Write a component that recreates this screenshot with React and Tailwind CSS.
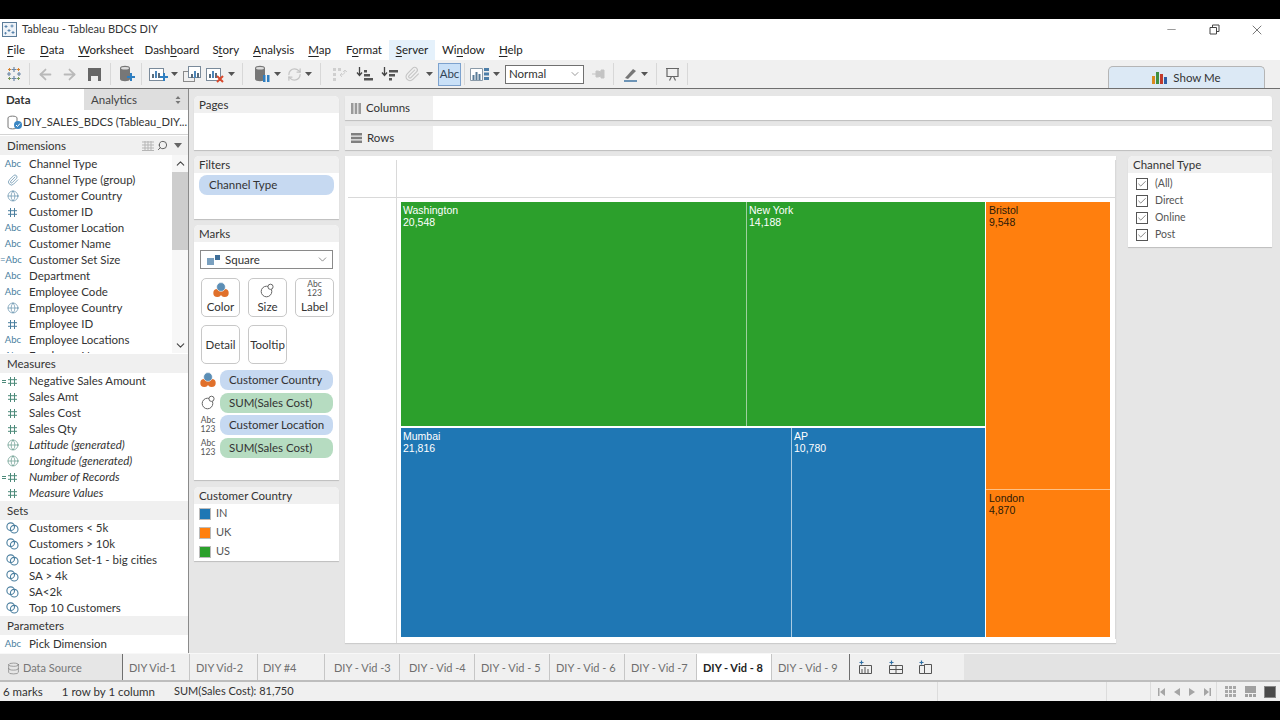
import React from "react";
import { Globe, Paperclip, ChevronDown, ChevronUp, ArrowLeft, ArrowRight, RefreshCw, X, Minus, Search, Check, Database } from "lucide-react";

const Caret = ({ className = "ml-[3px]" }) => (
  <svg width="7" height="4" viewBox="0 0 7 4" className={`shrink-0 ${className}`}><path d="M0 0h7L3.5 4z" fill="#555" /></svg>
);
const Sep = ({ className }) => <div className={`w-px h-[22px] bg-[#d8d8d8] shrink-0 ${className}`} />;

const Bars = ({ plus, cross, dup }) => (
  <svg width="20" height="18" viewBox="0 0 20 18" className="shrink-0">
    {dup && <rect x="0.5" y="6.5" width="11" height="10" fill="none" stroke="#8a8a8a" />}
    <rect x={dup ? 5.5 : 1.5} y={dup ? 1.5 : 3.5} width={dup ? 12 : 14} height={dup ? 11 : 12} fill="#fff" stroke="#7a8a9a" />
    <rect x={dup ? 8 : 4} y="9" width="2" height="4" fill="#5a6c7c" />
    <rect x={dup ? 11 : 7} y="6" width="2" height="7" fill="#4d86b8" />
    <rect x={dup ? 14 : 10} y="8" width="2" height="5" fill="#5a6c7c" />
    {plus && <path d="M12 11h3V8h2v3h3v2h-3v3h-2v-3h-3z" fill="#2f7fc1" />}
    {cross && <path d="M12 11l6 6M18 11l-6 6" stroke="#d9492c" strokeWidth="2" />}
  </svg>
);
const Cyl = ({ plus, pause }) => (
  <svg width="18" height="18" viewBox="0 0 18 18" className="shrink-0">
    <path d="M2 3c0-3 10-3 10 0v11c0 3-10 3-10 0z" fill="#777" />
    <ellipse cx="7" cy="3.2" rx="4" ry="1.3" fill="#ddd" />
    {plus && <path d="M9 11h3V8h2v3h3v2h-3v3h-2v-3H9z" fill="#2f7fc1" />}
    {pause && <path d="M10 10h2.5v7H10zM14 10h2.5v7H14z" fill="#2f7fc1" />}
  </svg>
);
const SortIcon = ({ desc }) => (
  <svg width="18" height="16" viewBox="0 0 18 16" className="shrink-0">
    <path d="M3.5 1v8M1 6.5l2.5 3 2.5-3" stroke="#444" strokeWidth="1.3" fill="none" />
    {desc ? (
      <path d="M8 4h9v2.5H8zM8 8h6v2.5H8zM8 12h3v2.5H8z" fill="#555" />
    ) : (
      <path d="M8 12h9v2.5H8zM8 8h6v2.5H8zM8 4h3v2.5H8z" fill="#555" />
    )}
  </svg>
);
const Logo = ({ s = 16 }) => (
  <svg width={s} height={s} viewBox="0 0 16 16" className="shrink-0">
    <path d="M8 1v5M5.5 3.5h5M3 6v4M1 8h4M13 6v4M11 8h4M8 10v5M5.5 12.5h5" stroke="#6c87a5" strokeWidth="1.2" />
    <path d="M3.5 2v3M2 3.5h3M12.5 2v3M11 3.5h3" stroke="#d9822b" strokeWidth="1" />
    <path d="M3.5 11v3M2 12.5h3M12.5 11v3M11 12.5h3" stroke="#7a9a5a" strokeWidth="1" />
  </svg>
);
const TitleLogo = () => (
  <svg width="15" height="15" viewBox="0 0 15 15" className="shrink-0">
    <rect x="0.5" y="0.5" width="14" height="14" fill="#eef3f8" stroke="#5b7c99" />
    <path d="M4 3v3M2.5 4.5h3M10 2.5v3M8.5 4h3M7 7v3M5.5 8.5h3M11 9v3M9.5 10.5h3M3.5 10v2.5M2.3 11.2h2.5" stroke="#4f7ea8" strokeWidth="0.9" />
  </svg>
);
const Tag = ({ eq }) => (
  <span className="w-[22px] shrink-0 text-right text-[9.5px] leading-4 text-[#4b7f9f] pr-[1px] whitespace-nowrap">{eq ? "=Abc" : "Abc"}</span>
);
const Hash = ({ c = "#4b7f9f", eq }) => (
  <span className="w-[19px] shrink-0 flex justify-end items-center pr-[1px]">
    {eq && <span className="w-[4px] h-[3px] border-y mr-px" style={{ borderColor: c }} />}
    <svg width="11" height="11" viewBox="0 0 11 11">
      <path d="M3.5 1v9M7.5 1v9M1 3.7h9M1 7.3h9" stroke={c} strokeWidth="1" fill="none" />
    </svg>
  </span>
);
const Glob = ({ c = "#4b7f9f" }) => (
  <span className="w-[21px] shrink-0 flex justify-end pr-[2px]"><Globe size={12} color={c} strokeWidth={1.2} /></span>
);
const Clip = () => (
  <span className="w-[21px] shrink-0 flex justify-end pr-[2px]"><Paperclip size={12} color="#4b7f9f" strokeWidth={1.3} /></span>
);
const SetI = () => (
  <span className="w-[21px] shrink-0 flex justify-end pr-[2px]">
    <svg width="13" height="12" viewBox="0 0 13 12">
      <circle cx="4.7" cy="4.7" r="3.8" fill="none" stroke="#4b7f9f" strokeWidth="1.1" />
      <circle cx="8.2" cy="7.2" r="3.8" fill="none" stroke="#4b7f9f" strokeWidth="1.1" />
    </svg>
  </span>
);

const Row = ({ icon, children, italic }) => (
  <div className={`h-4 flex items-center shrink-0 ${italic ? "italic" : ""}`}>
    <div className="w-[22px] flex shrink-0">{icon}</div>
    <span className="ml-[7px] whitespace-nowrap text-[#333]">{children}</span>
  </div>
);
const SecHead = ({ children, right }) => (
  <div className="h-[19px] bg-[#f0f0f0] flex items-center pl-[7px] shrink-0 text-[#333]">{children}{right}</div>
);
const G = "#4d8a7a";

const ColorIcon = ({ s = 16 }) => (
  <svg width={s} height={s} viewBox="0 0 16 16" className="shrink-0">
    <circle cx="4.3" cy="11" r="4" fill="#e0702b" />
    <circle cx="11.7" cy="11" r="4" fill="#e0702b" />
    <circle cx="8" cy="5" r="4.4" fill="#5c8eb5" stroke="#fff" strokeWidth="0.6" />
  </svg>
);
const SizeIcon = () => (
  <svg width="15" height="15" viewBox="0 0 15 15" className="shrink-0">
    <circle cx="6.5" cy="8.5" r="5.3" fill="none" stroke="#666" />
    <circle cx="10.5" cy="3.8" r="2.6" fill="#fff" stroke="#666" />
  </svg>
);
const AbcStack = () => (
  <div className="flex flex-col items-center text-[8.5px] leading-[9px] text-[#555] shrink-0">
    <span>Abc</span>
    <span>123</span>
  </div>
);

const MarkBtn = ({ icon, label, className = "" }) => (
  <div className={`w-[39px] h-[39px] shrink-0 border border-[#c8c8c8] rounded-[5px] bg-white flex flex-col items-center pb-[1px] text-[#333] ${className}`}>
    {icon}
    <span className="leading-[17px]">{label}</span>
  </div>
);
const MarkRow = ({ icon, label, green }) => (
  <div className="flex items-center h-5">
    <div className="w-[26px] flex justify-center shrink-0 pl-[2px]">{icon}</div>
    <div className={`w-[113px] h-5 rounded-[8px] pl-[9px] flex items-center text-[#333] ${green ? "bg-[#b6dcc1]" : "bg-[#c6d9f1]"}`}>{label}</div>
  </div>
);
const Card = ({ title, className = "", children }) => (
  <div className={`bg-white rounded-t-[5px] shadow-[0_1px_1px_#bdbdbd] shrink-0 flex flex-col ${className}`}>
    <div className="h-[17px] bg-[#f0f0f0] rounded-t-[5px] pl-[5px] flex items-center text-[#333] shrink-0">{title}</div>
    {children}
  </div>
);
const Shelf = ({ icon, label }) => (
  <div className="h-6 flex bg-white shadow-[0_1px_1px_#bdbdbd] rounded-t-[3px] shrink-0">
    <div className="w-[88px] bg-[#f0f0f0] flex items-center pl-[6px] gap-[5px] text-[#333]">{icon}{label}</div>
  </div>
);
const Legend = ({ c, t }) => (
  <div className="flex items-center h-[19px] pl-[5px] text-[#555] text-[11px]">
    <span className="w-3 h-3 mr-[5px] border border-[#bbb]" style={{ background: c }} />
    {t}
  </div>
);
const CheckRow = ({ t }) => (
  <div className="flex items-center h-[17px] pl-2 text-[#555] text-[10.5px]">
    <span className="w-3 h-3 border border-[#555] mr-[7px] flex items-center justify-center bg-white">
      <Check size={10} color="#444" strokeWidth={1.5} />
    </span>
    {t}
  </div>
);
const Block = ({ c, name, v, className = "", tone = "text-white pl-[2px]" }) => (
  <div className={`font-['Liberation_Sans',sans-serif] text-[10.5px] leading-3 pt-[2px] ${tone} ${className}`} style={{ background: c }}>
    <div>{name}</div>
    <div>{v}</div>
  </div>
);
const Tab = ({ t, w, active }) => (
  <div className={`h-full flex items-center pt-[2px] border-r border-[#c6c6c6] shrink-0 whitespace-nowrap ${w} ${active ? "bg-white font-bold text-[#222]" : "text-[#6e6e6e]"}`}>{t}</div>
);
const SheetIcon = ({ kind }) => (
  <svg width="15" height="15" viewBox="0 0 15 15" className="shrink-0">
    <path d="M3.5 0.5v4M1.5 2.5h4" stroke="#2f6fa5" strokeWidth="1.2" />
    {kind === "ws" && <path d="M1.5 5.5h12v8h-12zM4 9v4M7 7v6M10 9v4" fill="none" stroke="#555" />}
    {kind === "db" && <path d="M1.5 5.5h13v8h-13zM1.5 9.5h13M8 5.5v8" fill="none" stroke="#555" />}
    {kind === "st" && <path d="M1.5 5.5h5v8h-5zM6.5 4.5h7v9h-7z" fill="none" stroke="#555" />}
  </svg>
);
const M = ({ u, pre = "", post = "", className = "" }) => (
  <span className={`whitespace-nowrap shrink-0 ${className}`}>{pre}<u className="underline-offset-2">{u}</u>{post}</span>
);

export default function App() {
  return (
    <div className="w-[1280px] h-[720px] bg-black overflow-hidden flex flex-col py-[19px] text-[11.5px] font-['Lato',sans-serif] text-[#333]">
      {/* Title bar */}
      <div className="h-[21px] bg-white flex items-center pl-[2px] shrink-0">
        <TitleLogo />
        <span className="ml-[5px] text-[11px] text-[#333]">Tableau - Tableau BDCS DIY</span>
        <Minus size={13} strokeWidth={1} color="#444" className="ml-auto" />
        <svg width="11" height="11" viewBox="0 0 11 11" className="ml-[31px]"><path d="M1 3.5h6.5V10H1zM3.5 3.5V1H10v6.5H7.5" fill="none" stroke="#444" /></svg>
        <X size={16} strokeWidth={1} color="#333" className="ml-[29px] mr-[15px]" />
      </div>
      {/* Menu */}
      <div className="h-5 bg-white flex items-center shrink-0 text-[#222] relative">
        <M u="F" post="ile" className="ml-[7px]" />
        <M u="D" post="ata" className="ml-[15px]" />
        <M u="W" post="orksheet" className="ml-[14px]" />
        <M pre="Dash" u="b" post="oard" className="ml-[11px]" />
        <M pre="S" u="t" post="ory" className="ml-[13px]" />
        <M u="A" post="nalysis" className="ml-[14px]" />
        <M u="M" post="ap" className="ml-[14px]" />
        <M pre="F" u="o" post="rmat" className="ml-[15px]" />
        <div className="ml-[7px] w-[46px] h-5 bg-[#e5f1fb] flex items-center justify-center"><M u="S" post="erver" /></div>
        <M pre="Wi" u="n" post="dow" className="ml-[7px]" />
        <M u="H" post="elp" className="ml-[14px]" />
      </div>
      {/* Toolbar */}
      <div className="h-[28px] bg-[#f0f0f0] flex items-center shrink-0 border-b border-[#6f6f6f] box-content relative">
        <div className="ml-[6px]"><Logo /></div>
        <Sep className="ml-[7px]" />
        <ArrowLeft size={17} color="#b9b9b9" strokeWidth={2.5} className="ml-[7px] shrink-0" />
        <ArrowRight size={17} color="#b9b9b9" strokeWidth={2.5} className="ml-[7px] shrink-0" />
        <svg width="15" height="15" viewBox="0 0 15 15" className="ml-[9px] shrink-0"><path d="M1 1h13v13H1z" fill="#666" /><path d="M4 9h7v5H4z" fill="#eee" /></svg>
        <Sep className="ml-[8px]" />
        <div className="ml-[7px]"><Cyl plus /></div>
        <Sep className="ml-[5px]" />
        <div className="ml-[6px] flex items-center"><Bars plus /><Caret /></div>
        <div className="ml-[5px]"><Bars dup /></div>
        <div className="ml-[2px] flex items-center"><Bars cross /><Caret /></div>
        <Sep className="ml-[7px]" />
        <div className="ml-[10px] flex items-center"><Cyl pause /><Caret /></div>
        <div className="ml-[6px] flex items-center"><RefreshCw size={15} color="#c4c4c4" strokeWidth={2} /><Caret /></div>
        <Sep className="ml-[8px]" />
        <svg width="17" height="16" viewBox="0 0 17 16" className="ml-[10px] shrink-0"><path d="M2 2h3v3H2zM7 2h3v3H7zM2 7h3v3H2zM2 12h3v3H2z" fill="#cfcfcf" /><path d="M9 9c3 0 5-1 5-5M14 4l-2 2M14 4l2 2M9 9l2-2M9 9l2 2" stroke="#cfcfcf" fill="none" /></svg>
        <div className="ml-[8px]"><SortIcon /></div>
        <div className="ml-[7px]"><SortIcon desc /></div>
        <Paperclip size={16} color="#c4c4c4" strokeWidth={1.6} className="ml-[5px] shrink-0" />
        <Caret className="ml-[6px]" />
        <div className="ml-[5px] w-[23px] h-[23px] bg-[#c9e0f7] border border-[#7da2ce] flex items-center justify-center text-[#345] shrink-0">Abc</div>
        <Sep className="ml-[3px]" />
        <div className="ml-[5px] flex items-center">
          <svg width="20" height="14" viewBox="0 0 20 14"><path d="M0.5 1.500h12v12h-12z" fill="#fff" stroke="#8a9aa8" /><path d="M2.500 8h2v5h-2zM5.500 5h2v8h-2zM8.500 7h2v6h-2z" fill="#5a7c98" /><path d="M14 1h5v3h-5zM14 5.500h5v3h-5zM14 10h5v3h-5z" fill="#4d7ea8" /></svg>
          <Caret />
        </div>
        <div className="ml-[5px] w-[79px] h-[19px] bg-white border border-[#707070] flex items-center pl-[3px] text-[#333] shrink-0">
          Normal
          <ChevronDown size={12} strokeWidth={1.2} color="#555" className="ml-auto mr-[2px]" />
        </div>
        <svg width="14" height="10" viewBox="0 0 14 10" className="ml-[8px] shrink-0"><path d="M0 5h4M4 2h2l3 1v4l-3 1H4zM9 1h3v8H9z" fill="#c4c4c4" stroke="#c4c4c4" /></svg>
        <Sep className="ml-[7px]" />
        <div className="ml-[9px] flex items-center">
          <svg width="15" height="15" viewBox="0 0 15 15"><path d="M2 11L10 2l3 2-8 8z" fill="#777" /><path d="M1 14h13" stroke="#4d7ea8" strokeWidth="1.6" /></svg>
          <Caret />
        </div>
        <Sep className="ml-[8px]" />
        <svg width="15" height="15" viewBox="0 0 15 15" className="ml-[8px] shrink-0"><path d="M1 1.500h13M2 1.500v8h11v-8M4.500 13.500l2-4M10.500 13.500l-2-4" fill="none" stroke="#666" strokeWidth="1.2" /></svg>
        <Sep className="ml-[7px]" />
        <div className="ml-auto mr-[15px] w-[157px] h-[22px] self-end bg-[#dce9f5] border border-b-0 border-[#b5b5b5] rounded-t-[5px] flex items-center justify-center gap-[6px] text-[#333]">
          <svg width="15" height="13" viewBox="0 0 15 13"><path d="M0 5h3v8H0z" fill="#d98a1f" /><path d="M4 1h3v12H4z" fill="#3f8f3f" /><path d="M8 3h3v10H8z" fill="#c23b2c" /><path d="M12 6h3v7h-3z" fill="#2f5fa5" /></svg>
          Show Me
        </div>
      </div>

      {/* Body */}
      <div className="h-[564px] shrink-0 flex bg-[#e6e6e6]">
        {/* Data pane */}
        <div className="w-[189px] shrink-0 bg-white border-r border-[#8a8a8a] flex flex-col overflow-hidden">
          <div className="h-[21px] flex shrink-0">
            <div className="w-[84px] pl-[6px] flex items-center font-bold text-[#333]">Data</div>
            <div className="flex-1 bg-[#dedede] flex items-center pl-[7px] text-[#444]">
              Analytics
              <svg width="6" height="8" viewBox="0 0 6 8" className="ml-auto mr-[7px]"><path d="M3 0l2.500 3h-5zM3 8L.5 5h5z" fill="#777" /></svg>
            </div>
          </div>
          <div className="h-[25px] flex items-center pl-[7px] border-b border-[#d4d4d4] shrink-0 whitespace-nowrap text-[#333] text-[11.2px]">
            <svg width="16" height="15" viewBox="0 0 16 15" className="shrink-0"><path d="M1 3c0-2.500 9-2.500 9 0v9c0 2.500-9 2.500-9 0z" fill="#fff" stroke="#777" /><circle cx="11" cy="10" r="4" fill="#3b87c4" /><path d="M9 10l1.500 1.500L13 8.500" stroke="#fff" fill="none" /></svg>
            DIY_SALES_BDCS (Tableau_DIY...
          </div>
          <div className="h-px shrink-0" />
          <SecHead right={
            <div className="ml-auto flex items-center mr-[6px] gap-[3px]">
              <svg width="12" height="10" viewBox="0 0 12 10"><path d="M0 1h12M0 4h12M0 7h12M0 9.500h12M3 0v10M6 0v10M9 0v10" stroke="#b5b5b5" /></svg>
              <Search size={11} color="#555" className="-scale-x-100" />
              <svg width="8" height="5" viewBox="0 0 8 5" className="ml-[3px]"><path d="M0 0h8L4 5z" fill="#666" /></svg>
            </div>
          }>Dimensions</SecHead>
          <div className="h-[198px] flex shrink-0 overflow-hidden">
            <div className="w-[172px] pt-px flex flex-col shrink-0">
              <Row icon={<Tag />}>Channel Type</Row>
              <Row icon={<Clip />}>Channel Type (group)</Row>
              <Row icon={<Glob />}>Customer Country</Row>
              <Row icon={<Hash />}>Customer ID</Row>
              <Row icon={<Tag />}>Customer Location</Row>
              <Row icon={<Tag />}>Customer Name</Row>
              <Row icon={<Tag eq />}>Customer Set Size</Row>
              <Row icon={<Tag />}>Department</Row>
              <Row icon={<Tag />}>Employee Code</Row>
              <Row icon={<Glob />}>Employee Country</Row>
              <Row icon={<Hash />}>Employee ID</Row>
              <Row icon={<Tag />}>Employee Locations</Row>
              <Row icon={<Tag />}>Employee Name</Row>
            </div>
            <div className="flex-1 flex flex-col items-center bg-[#f7f7f7]">
              <ChevronUp size={13} strokeWidth={2} color="#444" className="mt-[2px] shrink-0" />
              <div className="w-full h-[78px] bg-[#cdcdcd] mt-[2px] shrink-0" />
              <ChevronDown size={13} strokeWidth={2} color="#444" className="mt-auto mb-[1px] shrink-0" />
            </div>
          </div>
          <div className="h-px shrink-0" />
          <SecHead>Measures</SecHead>
          <Row icon={<Hash c={G} eq />}>Negative Sales Amount</Row>
          <Row icon={<Hash c={G} />}>Sales Amt</Row>
          <Row icon={<Hash c={G} />}>Sales Cost</Row>
          <Row icon={<Hash c={G} />}>Sales Qty</Row>
          <Row icon={<Glob c={G} />} italic>Latitude (generated)</Row>
          <Row icon={<Glob c={G} />} italic>Longitude (generated)</Row>
          <Row icon={<Hash c={G} eq />} italic>Number of Records</Row>
          <Row icon={<Hash c={G} />} italic>Measure Values</Row>
          <SecHead>Sets</SecHead>
          <Row icon={<SetI />}>Customers &lt; 5k</Row>
          <Row icon={<SetI />}>Customers &gt; 10k</Row>
          <Row icon={<SetI />}>Location Set-1 - big cities</Row>
          <Row icon={<SetI />}>SA &gt; 4k</Row>
          <Row icon={<SetI />}>SA&lt;2k</Row>
          <Row icon={<SetI />}>Top 10 Customers</Row>
          <SecHead>Parameters</SecHead>
          <div className="h-px shrink-0" />
          <Row icon={<Tag />}>Pick Dimension</Row>
        </div>

        {/* Cards column */}
        <div className="w-[156px] shrink-0 pl-[5px] pr-[6px] pt-[7px] flex flex-col">
          <Card title="Pages" className="h-[54px]" />
          <Card title="Filters" className="h-[63px] mt-[6px]">
            <div className="mt-[2px] mx-[5px] h-5 rounded-[8px] bg-[#c6d9f1] pl-[10px] flex items-center text-[#333]">Channel Type</div>
          </Card>
          <Card title="Marks" className="h-[255px] mt-[6px]">
            <div className="mt-[8px] mx-[6px] h-[19px] border border-[#8a8a8a] flex items-center pl-[6px] text-[#333]">
              <svg width="13" height="10" viewBox="0 0 13 10" className="mr-[5px]"><path d="M0 3h7v7H0z" fill="#7aa0bf" /><path d="M8 0h5v5H8z" fill="#3f6f99" /></svg>
              Square
              <ChevronDown size={13} strokeWidth={1.2} color="#555" className="ml-auto mr-[3px]" />
            </div>
            <div className="flex mt-[9px] ml-[7px]">
              <MarkBtn icon={<ColorIcon />} label="Color" className="justify-end" />
              <MarkBtn icon={<SizeIcon />} label="Size" className="ml-[8px] justify-end" />
              <MarkBtn icon={<AbcStack />} label="Label" className="ml-[8px] justify-end" />
            </div>
            <div className="flex mt-[8px] ml-[7px]">
              <MarkBtn label="Detail" className="justify-center" />
              <MarkBtn label="Tooltip" className="ml-[8px] justify-center" />
            </div>
            <div className="flex flex-col mt-[6px] gap-[2.5px]">
              <MarkRow icon={<ColorIcon />} label="Customer Country" />
              <MarkRow icon={<SizeIcon />} label="SUM(Sales Cost)" green />
              <MarkRow icon={<AbcStack />} label="Customer Location" />
              <MarkRow icon={<AbcStack />} label="SUM(Sales Cost)" green />
            </div>
          </Card>
          <Card title="Customer Country" className="h-[74px] mt-[7px]">
            <Legend c="#1f77b4" t="IN" />
            <Legend c="#ff7f0e" t="UK" />
            <Legend c="#2ca02c" t="US" />
          </Card>
        </div>

        {/* Main */}
        <div className="flex-1 min-w-0 pt-[7px] pr-[8px] flex flex-col">
          <Shelf label="Columns" icon={
            <svg width="10" height="11" viewBox="0 0 10 11"><path d="M0 0h2.500v11H0zM3.700 0h2.500v11H3.700zM7.400 0H10v11H7.400z" fill="#9a9a9a" /></svg>
          } />
          <div className="h-[6px] shrink-0" />
          <Shelf label="Rows" icon={
            <svg width="11" height="10" viewBox="0 0 11 10"><path d="M0 0h11v2.500H0zM0 3.700h11v2.500H0zM0 7.400h11V10H0z" fill="#808080" /></svg>
          } />
          <div className="flex mt-[6px] shrink-0">
            {/* Canvas */}
            <div className="w-[771px] h-[487px] bg-white flex shrink-0 shadow-[0_1px_1px_#ccc]">
              <div className="w-[51px] flex flex-col shrink-0 pt-[4px]">
                <div className="h-[38px] border-b border-[#d9d9d9] ml-[3px]" />
              </div>
              <div className="flex-1 flex flex-col pt-[4px] min-w-0">
                <div className="h-[38px] border-b border-l border-[#d9d9d9] shrink-0 mr-[2px]" />
                <div className="flex-1 border-l border-[#d9d9d9] pl-[4px] pt-[4px] pb-[6px] flex min-h-0">
                  <div className="w-[584px] flex flex-col shrink-0">
                    <div className="h-[224px] flex shrink-0 border-b-2 border-white box-content">
                      <Block c="#2ca02c" name="Washington" v="20,548" className="w-[343px] shrink-0 border-r border-[#9fd09f] box-content" />
                      <Block c="#2ca02c" name="New York" v="14,188" className="flex-1" />
                    </div>
                    <div className="flex-1 flex min-h-0">
                      <Block c="#1f77b4" name="Mumbai" v="21,816" className="w-[388px] shrink-0 border-r border-[#a9cbe3] box-content" />
                      <Block c="#1f77b4" name="AP" v="10,780" className="flex-1" />
                    </div>
                  </div>
                  <div className="w-[124px] ml-px flex flex-col shrink-0">
                    <div className="h-[287px] shrink-0 border-b border-[#ffc184] box-content flex flex-col">
                      <Block c="#ff7f0e" name="Bristol" v="9,548" className="flex-1" tone="text-[#2a1a08] pl-[3px]" />
                    </div>
                    <div className="flex-1 flex flex-col min-h-0">
                      <Block c="#ff7f0e" name="London" v="4,870" className="flex-1" tone="text-[#2a1a08] pl-[3px]" />
                    </div>
                  </div>
                </div>
              </div>
              <div className="w-px bg-[#d9d9d9] shrink-0 my-[4px] -ml-[2px]" />
            </div>
            {/* Right legend */}
            <div className="ml-[12px] w-[144px] shrink-0">
              <Card title="Channel Type" className="h-[91px]">
                <div className="pt-[2px]">
                  <CheckRow t="(All)" />
                  <CheckRow t="Direct" />
                  <CheckRow t="Online" />
                  <CheckRow t="Post" />
                </div>
              </Card>
            </div>
          </div>
        </div>
      </div>

      {/* Tabs */}
      <div className="h-[29px] shrink-0 bg-[#e3e3e3] border-t border-[#f8f8f8] border-b-2 border-b-[#bdbdbd] flex items-stretch text-[11px]">
        <div className="w-[123px] shrink-0 bg-[#e6e6e6] border-r border-[#6f6f6f] flex items-center pt-[2px] pl-[7px] gap-[3px] text-[#777]">
          <Database size={13} color="#777" strokeWidth={1.2} className="shrink-0" />
          Data Source
        </div>
        <div className="flex bg-[#f0f0f0] text-[#6e6e6e]">
          <Tab t="DIY Vid-1" w="w-[67px] pl-[6px]" />
          <Tab t="DIY Vid-2" w="w-[68px] pl-[6px]" />
          <Tab t="DIY #4" w="w-[67px] pl-[5px]" />
          <Tab t="DIY - Vid -3" w="w-[75px] pl-[9px]" />
          <Tab t="DIY - Vid -4" w="w-[75px] pl-[9px]" />
          <Tab t="DIY - Vid - 5" w="w-[75px] pl-[6px]" />
          <Tab t="DIY - Vid - 6" w="w-[75px] pl-[6px]" />
          <Tab t="DIY - Vid -7" w="w-[72px] pl-[6px]" />
          <Tab t="DIY - Vid - 8" w="w-[75px] pl-[6px]" active />
          <div className="w-[78px] flex items-center pl-[6px] pt-[2px] border-r border-[#6f6f6f] text-[#6e6e6e] whitespace-nowrap">DIY - Vid - 9</div>
        </div>
        <div className="flex items-center pl-[8px] gap-[15px] bg-[#f0f0f0] w-[114px] shrink-0">
          <SheetIcon kind="ws" />
          <SheetIcon kind="db" />
          <SheetIcon kind="st" />
        </div>
      </div>

      {/* Status */}
      <div className="flex-1 min-h-0 bg-[#f0f0f0] flex items-center pl-[3px] text-[#333]">
        <span>6 marks</span>
        <span className="ml-[19px]">1 row by 1 column</span>
        <span className="ml-[19px] text-[11px]">SUM(Sales Cost): 81,750</span>
        <div className="ml-auto h-full w-[169px] border-l border-[#dcdcdc] shrink-0" />
        <div className="h-full w-[44px] border-l border-[#dcdcdc] shrink-0" />
        <div className="h-full border-l border-[#dcdcdc] flex items-center pl-[7px] w-[66px] shrink-0 gap-[8px]">
          <svg width="7" height="8" viewBox="0 0 7 8"><path d="M0 0h1.500v8H0zM7 0v8L2 4z" fill="#a5a5a5" /></svg>
          <svg width="6" height="8" viewBox="0 0 6 8" className="ml-[1px]"><path d="M6 0v8L0 4z" fill="#a5a5a5" /></svg>
          <svg width="6" height="8" viewBox="0 0 6 8" className="ml-[1px]"><path d="M0 0v8l6-4z" fill="#a5a5a5" /></svg>
          <svg width="7" height="8" viewBox="0 0 7 8" className="ml-[1px]"><path d="M7 0H5.500v8H7zM0 0v8l5-4z" fill="#a5a5a5" /></svg>
        </div>
        <div className="h-full w-[64px] border-l border-[#dcdcdc] flex items-center pl-[8px] gap-[9px] shrink-0">
          <svg width="11" height="11" viewBox="0 0 11 11"><path d="M0 0h3v3H0zM4 0h3v3H4zM8 0h3v3H8zM0 4h3v3H0zM4 4h3v3H4zM8 4h3v3H8zM0 8h3v3H0zM4 8h3v3H4zM8 8h3v3H8z" fill="#a8a8a8" /></svg>
          <svg width="11" height="11" viewBox="0 0 11 11"><path d="M0 0h11v7H0zM0 8h3v3H0zM4 8h3v3H4zM8 8h3v3H8z" fill="#a0a0a0" /></svg>
          <span className="w-[10px] h-[10px] bg-[#4a4a4a] border border-[#888] box-content -ml-px" />
        </div>
      </div>
    </div>
  );
}
